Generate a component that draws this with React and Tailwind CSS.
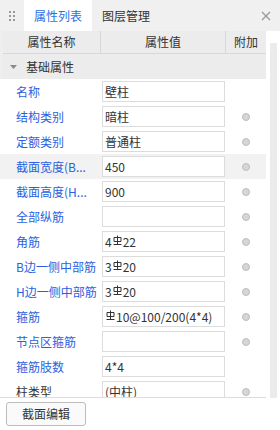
import React from 'react';

// HRB400 rebar grade symbol
const Rebar = () => (
    <svg width="9" height="11" viewBox="0 0 9 11" className="inline-block -mt-[6px] mx-[1px]" fill="none" stroke="#333" strokeWidth="1">
        <line x1="4.5" y1="0.5" x2="4.5" y2="9.5" />
        <path d="M1 2.5 H8 V6.5 H1 Z" />
        <line x1="0.5" y1="9.5" x2="8.5" y2="9.5" />
    </svg>
);

const rows = [
    { label: '名称', value: '壁柱', radio: false },
    { label: '结构类别', value: '暗柱', radio: true },
    { label: '定额类别', value: '普通柱', radio: true },
    { label: '截面宽度(B...', value: '450', radio: true, active: true },
    { label: '截面高度(H...', value: '900', radio: true },
    { label: '全部纵筋', value: '', radio: true },
    { label: '角筋', value: ['4', '22'], radio: true },
    { label: 'B边一侧中部筋', value: ['3', '20'], radio: true },
    { label: 'H边一侧中部筋', value: ['3', '20'], radio: true },
    { label: '箍筋', value: ['', '10@100/200(4*4)'], radio: true },
    { label: '节点区箍筋', value: '', radio: true },
    { label: '箍筋肢数', value: '4*4', radio: false },
    { label: '柱类型', value: '(中柱)', radio: true, dark: true },
];

const Row = ({ row }) => (
    <div className={`flex h-[25px] items-center shrink-0 ${row.active ? 'bg-[#f2f2f2]' : 'bg-white'}`}>
        <div className={`w-[101px] pl-4 whitespace-nowrap overflow-hidden ${row.dark ? 'text-[#333]' : 'text-[#2b5fe0]'}`}>
            {row.label}
        </div>
        <div className="w-[125px] pl-px pr-px">
            <div className="h-[21px] border border-[#dcdcdc] bg-white px-[2px] leading-[19px] text-[#333] whitespace-nowrap overflow-hidden">
                {Array.isArray(row.value) ? (
                    <>{row.value[0]}<Rebar />{row.value[1]}</>
                ) : row.value}
            </div>
        </div>
        <div className="w-[40px] flex justify-center">
            {row.radio && (
                <span className="w-[8px] h-[8px] rounded-full bg-[#d6d6d6] border border-[#bdbdbd]" />
            )}
        </div>
    </div>
);

export default function App() {
    return (
        <div
            className="w-[280px] h-[430px] flex flex-col bg-white text-[12px] overflow-hidden"
            style={{ fontFamily: '"Microsoft YaHei", "Noto Sans CJK SC", "Noto Sans", sans-serif' }}
        >
            {/* tab bar */}
            <div className="h-[31px] flex items-stretch bg-[#f0f0f0] shrink-0">
                <div className="w-[24px] flex items-center justify-center">
                    <div className="grid grid-cols-2 gap-x-[2px] gap-y-[2px]">
                        {[0, 1, 2, 3, 4, 5].map((i) => (
                            <span key={i} className="w-[2px] h-[2px] bg-[#999]" />
                        ))}
                    </div>
                </div>
                <div className="w-[68px] bg-white flex items-center justify-center text-[#2b6fe8]">属性列表</div>
                <div className="pl-[10px] flex items-center text-[#333]">图层管理</div>
                <div className="ml-auto pr-[9px] flex items-center">
                    <svg width="10" height="10" viewBox="0 0 10 10" stroke="#9a9a9a" strokeWidth="1.2">
                        <line x1="1" y1="1" x2="9" y2="9" />
                        <line x1="9" y1="1" x2="1" y2="9" />
                    </svg>
                </div>
            </div>

            {/* grid */}
            <div className="flex-1 flex min-h-0 border-l-[3px] border-[#eeeeee]">
                <div className="w-[263px] flex flex-col min-h-0">
                    <div className="h-[23px] flex bg-[#ececec] border-b border-[#d8d8d8] text-[#333] shrink-0">
                        <div className="w-[98px] flex items-center justify-center border-r border-[#d8d8d8]">属性名称</div>
                        <div className="w-[125px] flex items-center justify-center border-r border-[#d8d8d8]">属性值</div>
                        <div className="w-[40px] flex items-center justify-center">附加</div>
                    </div>
                    <div className="h-[25px] flex items-center bg-[#ececec] text-[#333] shrink-0">
                        <svg width="7" height="4" viewBox="0 0 7 4" className="ml-[7px] mr-[9px]">
                            <path d="M0 0 H7 L3.5 4 Z" fill="#8a8a8a" />
                        </svg>
                        基础属性
                    </div>
                    <div className="flex-1 flex flex-col overflow-hidden -ml-[3px] border-b border-[#dcdcdc]">
                        {rows.map((row) => (
                            <Row key={row.label} row={row} />
                        ))}
                    </div>
                </div>
                {/* scrollbar */}
                <div className="flex-1 flex flex-col items-center pt-[12px] pb-0">
                    <div className="w-[7px] h-[356px] bg-[#ebebeb] rounded-[1px]" />
                </div>
            </div>

            {/* bottom */}
            <div className="h-[32px] flex items-center pl-[6px] bg-white shrink-0">
                <button className="w-[80px] h-[24px] border border-[#bcbcbc] rounded-[3px] bg-[#fafafa] text-[#333]">
                    截面编辑
                </button>
            </div>
        </div>
    );
}
